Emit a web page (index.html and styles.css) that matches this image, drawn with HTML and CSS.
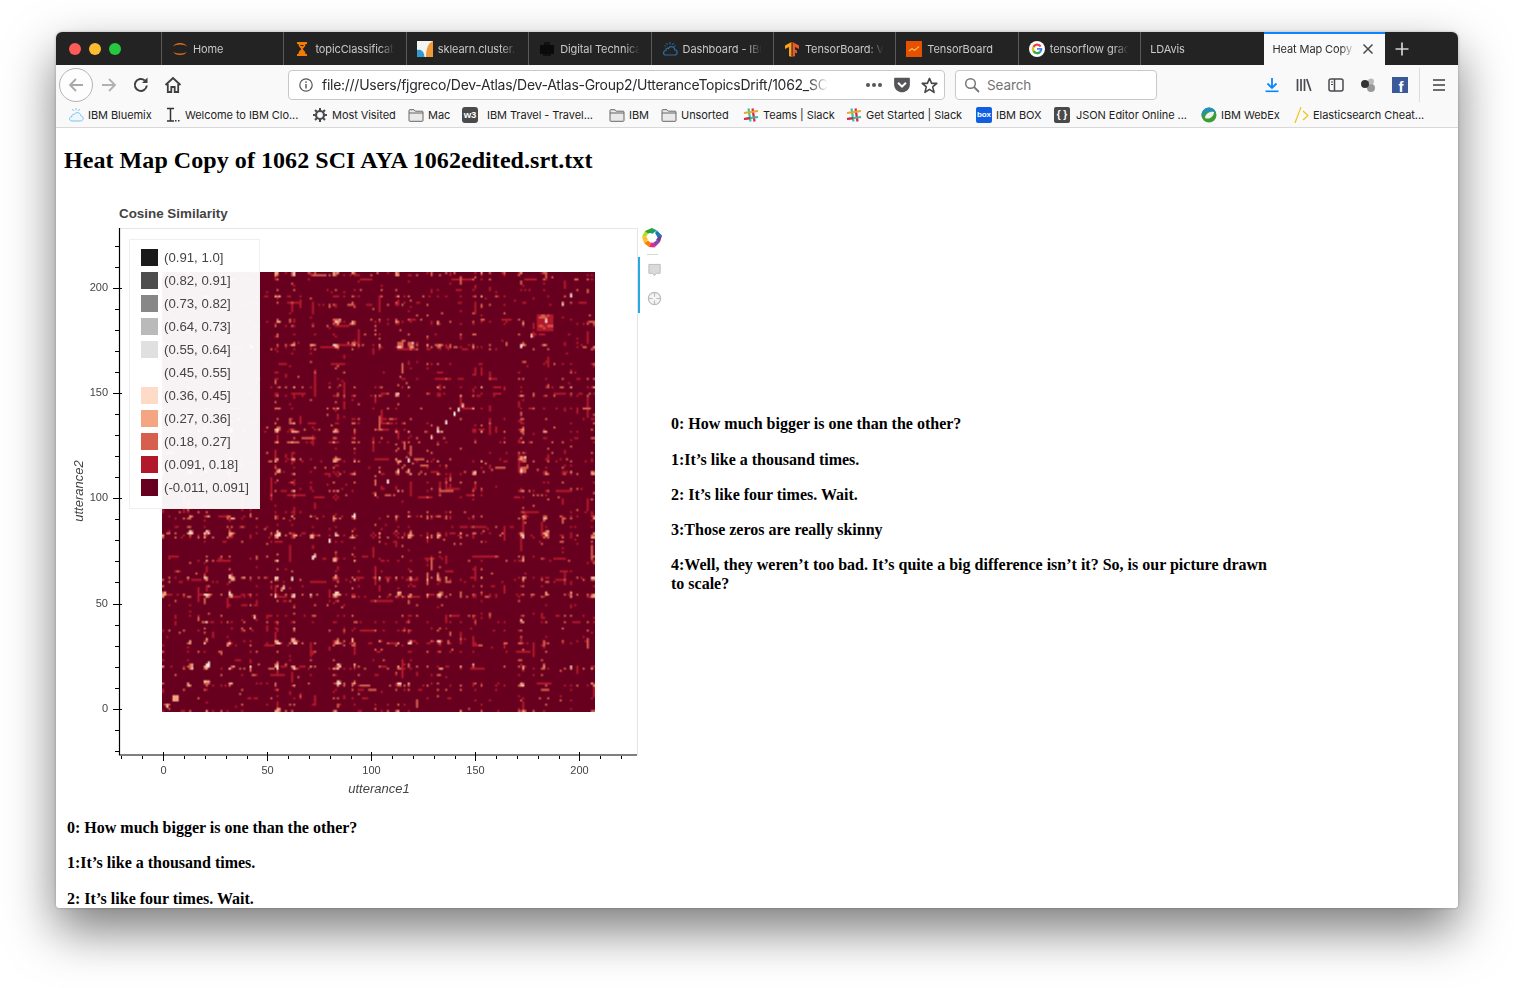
FILE: index.html
```html
<!DOCTYPE html>
<html lang="en">
<head>
<meta charset="utf-8">
<title>Heat Map</title>
<link rel="stylesheet" href="styles.css">
</head>
<body>
<div class="window">
  <div class="tabstrip">
    <div class="lights"><i class="light red"></i><i class="light yellow"></i><i class="light green"></i></div>
    <div class="tab">
      <svg class="fav" viewBox="0 0 16 16"><path d="M1 5.500C3 .8 13 .8 15 5.500C12.500 2.800 3.500 2.800 1 5.500ZM1 10.500C3 15.200 13 15.200 15 10.500C12.500 13.200 3.500 13.200 1 10.500Z" fill="#e46e17"/></svg>
      <span class="tab-title">Home</span>
    </div>
    <div class="tab">
      <svg class="fav" viewBox="0 0 16 16"><path d="M3 2H13M3 14H13" stroke="#f57c00" stroke-width="1.800"/><path d="M4.500 3H11.500C11.500 6 9 7 8.800 8C9 9 11.500 10 11.500 13H4.500C4.500 10 7 9 7.200 8C7 7 4.500 6 4.500 3ZM6 4C6.500 5.500 9.500 5.500 10 4Z" fill="#f57c00" fill-rule="evenodd"/></svg>
      <span class="tab-title">topicClassificat</span>
    </div>
    <div class="tab">
      <svg class="fav" viewBox="0 0 16 16"><rect width="16" height="16" fill="#f4f4f4"/><path d="M9 16C9 8 11 2 16 0V16Z" fill="#f09a37"/><path d="M0 9C4 8 7 10 7.500 16H0Z" fill="#3499cd"/></svg>
      <span class="tab-title">sklearn.cluster.</span>
    </div>
    <div class="tab">
      <svg class="fav" viewBox="0 0 16 16"><rect x="1" y="4" width="14" height="9" fill="#0a0a0a"/><rect x="5" y="1" width="6" height="3" fill="#111"/><rect x="4" y="13" width="8" height="2" fill="#111"/></svg>
      <span class="tab-title">Digital Technica</span>
    </div>
    <div class="tab">
      <svg class="fav" viewBox="0 0 16 16"><path d="M4 14H12.500C16 14 16 9 12.800 8.800C12.500 5 7.500 4.500 6.500 7.500C5 6.500 3.500 8 4 9.500C.5 10 1 14 4 14Z" fill="none" stroke="#2a6ea5" stroke-width="1.200"/><path d="M8 1V3.500M4.500 2L5.500 4M11.500 2L10.500 4M2.500 4.500L4 5.500M13.500 4.500L12 5.500" stroke="#2a6ea5" stroke-width="1"/></svg>
      <span class="tab-title">Dashboard - IBI</span>
    </div>
    <div class="tab">
      <svg class="fav" viewBox="0 0 16 16"><path d="M8.500 1L15 4.500V8L11 6V8.500L13 9.500V12.500L11 11.500V15L8.500 16V1Z" fill="#e55b2d"/><path d="M7.500 1L1 4.500V8L5 6V15L7.500 16V1Z" fill="#f9a11b"/></svg>
      <span class="tab-title">TensorBoard: V</span>
    </div>
    <div class="tab">
      <svg class="fav" viewBox="0 0 16 16"><rect width="16" height="16" fill="#e65100"/><path d="M3 10L6 7.500L8.500 9.500L13 5.500" fill="none" stroke="#ffb74d" stroke-width="1.200"/></svg>
      <span class="tab-title">TensorBoard</span>
    </div>
    <div class="tab">
      <svg class="fav" viewBox="0 0 16 16"><circle cx="8" cy="8" r="8" fill="#fff"/><path d="M12.700 5A5.300 5.300 0 0 0 3.500 5.200L5.400 6.700A3 3 0 0 1 10.600 5.900Z" fill="#ea4335"/><path d="M3.500 5.200A5.300 5.300 0 0 0 3.500 10.800L5.400 9.300A3 3 0 0 1 5.400 6.700Z" fill="#fbbc05"/><path d="M3.500 10.800A5.300 5.300 0 0 0 12.100 11.500L10.300 10A3 3 0 0 1 5.400 9.300Z" fill="#34a853"/><path d="M8 7H13.200C13.400 8.800 13 10.300 12.100 11.500L10.300 10C10.700 9.600 10.900 9.200 11 8.800H8Z" fill="#4285f4"/></svg>
      <span class="tab-title">tensorflow grac</span>
    </div>
    <div class="tab tab-plain">
      <span class="tab-title">LDAvis</span>
    </div>
    <div class="tab tab-active">
      <span class="tab-title">Heat Map Copy c</span>
      <svg class="tab-close" viewBox="0 0 12 12"><path d="M1.500 1.500L10.500 10.500M10.500 1.500L1.500 10.500" stroke="#4a4a4f" stroke-width="1.500"/></svg>
    </div>
    <svg class="newtab" viewBox="0 0 16 16"><path d="M8 1.500V14.500M1.500 8H14.500" stroke="#d4d4d4" stroke-width="1.700"/></svg>
  </div>

  <div class="toolbar">
    <div class="backbtn"><svg class="tool-ic" viewBox="0 0 18 18"><path d="M16 9H3M9 3L3 9L9 15" fill="none" stroke="#a9a9ac" stroke-width="1.800"/></svg></div>
    <svg class="tool-ic forward" viewBox="0 0 18 18"><path d="M2 9H15M9 3L15 9L9 15" fill="none" stroke="#b1b1b3" stroke-width="1.800"/></svg>
    <svg class="tool-ic reload" viewBox="0 0 18 18"><path d="M14.800 9.500A6 6 0 1 1 12.800 4.400" fill="none" stroke="#3f3f42" stroke-width="2"/><path d="M15.500 1.500V7H10Z" fill="#3f3f42"/></svg>
    <svg class="tool-ic home" viewBox="0 0 18 18"><path d="M1.500 9L9 2L16.500 9" fill="none" stroke="#3f3f42" stroke-width="1.900"/><path d="M3.800 8V16H7.300V11H10.700V16H14.200V8" fill="none" stroke="#3f3f42" stroke-width="1.800"/></svg>
    <div class="urlbar">
      <svg class="info" viewBox="0 0 16 16"><circle cx="8" cy="8" r="6.200" fill="none" stroke="#55555a" stroke-width="1.200"/><rect x="7.300" y="7" width="1.400" height="4.500" fill="#55555a"/><rect x="7.300" y="4.400" width="1.400" height="1.500" fill="#55555a"/></svg>
      <span class="url">file:///Users/fjgreco/Dev-Atlas/Dev-Atlas-Group2/UtteranceTopicsDrift/1062_SC</span>
      <span class="dots"><i></i><i></i><i></i></span>
      <svg class="pocket" viewBox="0 0 16 16"><path d="M1 2.500C1 1.800 1.500 1.500 2 1.500H14C14.500 1.500 15 1.800 15 2.500V7.500C15 11.500 11.500 14.500 8 14.500C4.500 14.500 1 11.500 1 7.500Z" fill="#55555a"/><path d="M4.500 6L8 9.500L11.500 6" fill="none" stroke="#fff" stroke-width="1.800"/></svg>
      <svg class="star" viewBox="0 0 16 16"><path d="M8 1.300L10 6H14.900L11 9.300L12.300 14.500L8 11.700L3.700 14.500L5 9.300L1.100 6H6Z" fill="none" stroke="#47474b" stroke-width="1.500" stroke-linejoin="round"/></svg>
    </div>
    <div class="searchbar">
      <svg class="search-ic" viewBox="0 0 16 16"><circle cx="6.500" cy="6.500" r="4.800" fill="none" stroke="#77777a" stroke-width="1.500"/><path d="M10 10L15 15" stroke="#77777a" stroke-width="1.800"/></svg>
      <span class="search-text">Search</span>
    </div>
    <div class="actions">
      <svg class="act" viewBox="0 0 16 16"><path d="M8 1V10.500M3.500 6.500L8 11L12.500 6.500" fill="none" stroke="#0a84ff" stroke-width="1.800"/><rect x="1.500" y="13.500" width="13" height="1.600" fill="#0a84ff"/></svg>
      <svg class="act" viewBox="0 0 16 16"><path d="M1.500 2V14M5 2V14M8.500 2V14M10.800 2L14.800 14" fill="none" stroke="#4a4a4f" stroke-width="1.700"/></svg>
      <svg class="act" viewBox="0 0 16 16"><rect x="1" y="2" width="14" height="12" rx="2" fill="none" stroke="#4a4a4f" stroke-width="1.500"/><path d="M6.500 2V14" stroke="#4a4a4f" stroke-width="1.500"/><path d="M3 5H5M3 7.500H5" stroke="#4a4a4f" stroke-width="1"/></svg>
      <svg class="act" viewBox="0 0 16 16"><circle cx="11" cy="4.500" r="3" fill="#bbb"/><circle cx="11" cy="11" r="4" fill="#999"/><circle cx="5" cy="7" r="4" fill="#333"/></svg>
      <svg class="act" viewBox="0 0 16 16"><rect width="16" height="16" fill="#3b5998"/><text class="fb-f" x="6.500" y="15">f</text></svg>
      <i class="act-sep"></i>
      <svg class="act menu" viewBox="0 0 16 16"><path d="M2 3H14M2 8H14M2 13H14" stroke="#3f3f42" stroke-width="1.700"/></svg>
    </div>
  </div>

  <div class="bookmarks">
    <span class="bm b1"><svg class="bm-ic" viewBox="0 0 16 16"><path d="M4 14H12.500C16 14 16 9 12.800 8.800C12.500 5 7.500 4.500 6.500 7.500C5 6.500 3.500 8 4 9.500C.5 10 1 14 4 14Z" fill="#eef7fd" stroke="#7ec3ec" stroke-width="1"/><path d="M8 1V3.500M4.500 2L5.500 4M11.500 2L10.500 4" stroke="#7ec3ec" stroke-width="1"/></svg>IBM Bluemix</span>
    <span class="bm b2"><svg class="bm-ic" viewBox="0 0 16 16"><path d="M2 1.500H9M5.500 1.500V14M2 14H9" fill="none" stroke="#333" stroke-width="1.500"/><rect x="10" y="13" width="1.500" height="1.500" fill="#333"/><rect x="13" y="13" width="1.500" height="1.500" fill="#333"/></svg>Welcome to IBM Clo...</span>
    <span class="bm b3"><svg class="bm-ic" viewBox="0 0 16 16"><circle cx="8" cy="8" r="4" fill="none" stroke="#4a4a4f" stroke-width="2.200"/><path d="M8 1V4M8 12V15M1 8H4M12 8H15M3 3L5 5M11 11L13 13M13 3L11 5M5 11L3 13" stroke="#4a4a4f" stroke-width="2"/></svg>Most Visited</span>
    <span class="bm b4"><svg class="bm-ic" viewBox="0 0 16 16"><path d="M1 13.500V3.500C1 3 1.300 2.700 1.800 2.700H6L7.300 4.200H14.200C14.700 4.200 15 4.500 15 5V13.500C15 14 14.700 14.300 14.200 14.300H1.800C1.300 14.300 1 14 1 13.500Z" fill="#e9e9e9" stroke="#666" stroke-width="1"/><path d="M1 6H15" stroke="#666" stroke-width="1"/></svg>Mac</span>
    <span class="bm b5"><span class="w3">w3</span>IBM Travel - Travel...</span>
    <span class="bm b6"><svg class="bm-ic" viewBox="0 0 16 16"><path d="M1 13.500V3.500C1 3 1.300 2.700 1.800 2.700H6L7.300 4.200H14.200C14.700 4.200 15 4.500 15 5V13.500C15 14 14.700 14.300 14.200 14.300H1.800C1.300 14.300 1 14 1 13.500Z" fill="#e9e9e9" stroke="#666" stroke-width="1"/><path d="M1 6H15" stroke="#666" stroke-width="1"/></svg>IBM</span>
    <span class="bm b7"><svg class="bm-ic" viewBox="0 0 16 16"><path d="M1 13.500V3.500C1 3 1.300 2.700 1.800 2.700H6L7.300 4.200H14.200C14.700 4.200 15 4.500 15 5V13.500C15 14 14.700 14.300 14.200 14.300H1.800C1.300 14.300 1 14 1 13.500Z" fill="#e9e9e9" stroke="#666" stroke-width="1"/><path d="M1 6H15" stroke="#666" stroke-width="1"/></svg>Unsorted</span>
    <span class="bm b8"><svg class="bm-ic" viewBox="0 0 16 16"><path d="M5.500 1.500L7.500 14.500" stroke="#36c5ab" stroke-width="2.200"/><path d="M9.500 1.500L11.500 14.500" stroke="#e01e5a" stroke-width="2.200"/><path d="M1 6L15 4" stroke="#e9a820" stroke-width="2.200"/><path d="M1 12L15 10" stroke="#3eb991" stroke-width="2.200"/><path d="M1 12L7 11.100" stroke="#e01e5a" stroke-width="2.200"/></svg>Teams | Slack</span>
    <span class="bm b9"><svg class="bm-ic" viewBox="0 0 16 16"><path d="M5.500 1.500L7.500 14.500" stroke="#36c5ab" stroke-width="2.200"/><path d="M9.500 1.500L11.500 14.500" stroke="#e01e5a" stroke-width="2.200"/><path d="M1 6L15 4" stroke="#e9a820" stroke-width="2.200"/><path d="M1 12L15 10" stroke="#3eb991" stroke-width="2.200"/><path d="M1 12L7 11.100" stroke="#e01e5a" stroke-width="2.200"/></svg>Get Started | Slack</span>
    <span class="bm b10"><span class="boxic">box</span>IBM BOX</span>
    <span class="bm b11"><span class="jsonic">{ }</span>JSON Editor Online ...</span>
    <span class="bm b12"><svg class="bm-ic" viewBox="0 0 16 16"><circle cx="8" cy="8" r="7.500" fill="#3f9c35"/><path d="M8 .5A7.500 7.500 0 0 0 .8 10C3 4 9 3 15 6A7.500 7.500 0 0 0 8 .5Z" fill="#1f8fc4"/><path d="M4 11C4 7 9 4 13 5C13 9 9 13 4 11Z" fill="#e9f3f3"/></svg>IBM WebEx</span>
    <span class="bm b13"><svg class="bm-ic" viewBox="0 0 16 16"><path d="M2 16L8 0" stroke="#f1c40f" stroke-width="1.200"/><path d="M10 4L15 8.500L10 13" fill="none" stroke="#f1c40f" stroke-width="1.200"/></svg>Elasticsearch Cheat...</span>
  </div>

  <main class="content">
    <h1 class="heading">Heat Map Copy of 1062 SCI AYA 1062edited.srt.txt</h1>
    <div class="row">
      <div class="plot">
        <div class="plot-title">Cosine Similarity</div>
        <svg class="plot-svg" viewBox="0 0 607 600">
          <path d="M55.500 22.500H573.500V549" fill="none" stroke="#e5e5e5" stroke-width="1"/>
          <path d="M55.500 22V549H573" fill="none" stroke="#000" stroke-width="1.200"/>
          <path d="M51 40.500H55M51 61.500H55M51 103.500H55M51 124.500H55M51 145.500H55M51 166.500H55M51 208.500H55M51 229.500H55M51 250.500H55M51 271.500H55M51 313.500H55M51 334.500H55M51 355.500H55M51 376.500H55M51 419.500H55M51 440.500H55M51 461.500H55M51 482.500H55M51 524.500H55M51 545.500H55" stroke="#000" stroke-width="1"/>
          <path d="M49 82.500H58M49 187.500H58M49 292.500H58M49 398.500H58M49 503.500H58" stroke="#000" stroke-width="1"/>
          <path d="M57.500 550V553M78.500 550V553M120.500 550V553M141.500 550V553M162.500 550V553M183.500 550V553M224.500 550V553M245.500 550V553M266.500 550V553M287.500 550V553M328.500 550V553M349.500 550V553M370.500 550V553M391.500 550V553M432.500 550V553M453.500 550V553M474.500 550V553M495.500 550V553M536.500 550V553M557.500 550V553" stroke="#000" stroke-width="1"/>
          <path d="M99.500 546V555M203.500 546V555M307.500 546V555M411.500 546V555M515.500 546V555" stroke="#000" stroke-width="1"/>
          <g class="tick-y">
            <text x="44" y="85">200</text>
            <text x="44" y="190">150</text>
            <text x="44" y="295">100</text>
            <text x="44" y="401">50</text>
            <text x="44" y="506">0</text>
          </g>
          <g class="tick-x">
            <text x="99.500" y="568">0</text>
            <text x="203.500" y="568">50</text>
            <text x="307.500" y="568">100</text>
            <text x="411.500" y="568">150</text>
            <text x="515.500" y="568">200</text>
          </g>
          <text class="axis-label" x="315" y="587" text-anchor="middle">utterance1</text>
          <text class="axis-label" transform="translate(19 285) rotate(-90)" text-anchor="middle">utterance2</text>
        </svg>
        <canvas class="heat" id="heat" width="208" height="208"></canvas>
        <div class="legend">
          <div class="leg-row"><i class="sw c1"></i>(0.91, 1.0]</div>
          <div class="leg-row"><i class="sw c2"></i>(0.82, 0.91]</div>
          <div class="leg-row"><i class="sw c3"></i>(0.73, 0.82]</div>
          <div class="leg-row"><i class="sw c4"></i>(0.64, 0.73]</div>
          <div class="leg-row"><i class="sw c5"></i>(0.55, 0.64]</div>
          <div class="leg-row"><i class="sw c6"></i>(0.45, 0.55]</div>
          <div class="leg-row"><i class="sw c7"></i>(0.36, 0.45]</div>
          <div class="leg-row"><i class="sw c8"></i>(0.27, 0.36]</div>
          <div class="leg-row"><i class="sw c9"></i>(0.18, 0.27]</div>
          <div class="leg-row"><i class="sw c10"></i>(0.091, 0.18]</div>
          <div class="leg-row"><i class="sw c11"></i>(-0.011, 0.091]</div>
        </div>
        <div class="bk-tools">
          <svg class="bk-logo" viewBox="0 0 20 20">
            <path d="M10 0L15 2.500L10 6L7 3Z" fill="#1b9e77"/><path d="M15 2.500L20 7.500L16 10L13 5Z" fill="#1f78b4"/><path d="M20 7.500L18 14L14 12L16 9Z" fill="#6a3d9a"/><path d="M18 14L13 19L11 15L15 12Z" fill="#8e44ad"/><path d="M13 19.500L7 19L9 14.500L12 15Z" fill="#e7298a"/><path d="M7 19L2 15L6 12.500L9 15Z" fill="#ff7f00"/><path d="M2 15L0 8.500L4 8L6 12Z" fill="#fdbf2f"/><path d="M0 8.500L3 3L7 3L5 8Z" fill="#b2df2a"/><path d="M3 3L10 0L9 5L6 5.500Z" fill="#33a02c"/>
            <circle cx="10" cy="10" r="3.800" fill="#fff"/>
          </svg>
          <i class="bk-sep"></i>
          <svg class="bk-ic" viewBox="0 0 16 16"><path d="M2 1.500H14V11H10L8 13.500L6 11H2Z" fill="#d8dadb" stroke="#b9bcbe" stroke-width="1"/></svg>
          <svg class="bk-ic" viewBox="0 0 16 16"><circle cx="8" cy="8" r="6.500" fill="#f4f4f4" stroke="#b9bcbe" stroke-width="1.300"/><path d="M8 1V6M8 10V15M1 8H6M10 8H15" stroke="#b9bcbe" stroke-width="1.300"/></svg>
          <i class="bk-active"></i>
        </div>
      </div>
      <div class="notes">
        <p class="note">0: How much bigger is one than the other?</p>
        <p class="note">1:It’s like a thousand times.</p>
        <p class="note">2: It’s like four times. Wait.</p>
        <p class="note">3:Those zeros are really skinny</p>
        <p class="note">4:Well, they weren’t too bad. It’s quite a big difference isn’t it? So, is our picture drawn to scale?</p>
      </div>
    </div>
    <div class="notes-below">
      <p class="note">0: How much bigger is one than the other?</p>
      <p class="note">1:It’s like a thousand times.</p>
      <p class="note">2: It’s like four times. Wait.</p>
    </div>
  </main>
</div>
<script src="heat.js"></script>
</body>
</html>
```

FILE: styles.css
```css
* { box-sizing: border-box; }
html, body { margin: 0; padding: 0; background: #fff; height: 988px; overflow: hidden; }
body { padding: 32px 56px 0; }

.window {
  width: 1402px;
  height: 876px;
  border-radius: 6px 6px 4px 4px;
  overflow: hidden;
  background: #fff;
  box-shadow: 0 22px 50px rgba(0,0,0,.52), 0 0 3px rgba(0,0,0,.25);
  display: flex;
  flex-direction: column;
}

/* tab strip */
.tabstrip { height: 33px; background: #232323; display: flex; flex: none; align-items: stretch; }
.lights { width: 105px; display: flex; align-items: center; gap: 8px; padding-left: 13px; flex: none; }
.light { width: 12px; height: 12px; border-radius: 50%; display: block; }
.red { background: #fc5b57; }
.yellow { background: #fdbc2e; }
.green { background: #27c83f; }
.tab {
  width: 122.400px; flex: none; display: flex; align-items: center; gap: 5px;
  padding: 0 8px 0 10px; border-left: 1px solid #5a5a5a; overflow: hidden;
}
.tab-plain { padding-left: 9px; }
.fav { width: 16px; height: 16px; flex: none; }
.tab-title {
  font: 11px/16px "Inter", "Liberation Sans", sans-serif; color: #c9c9c9; white-space: nowrap; overflow: hidden; flex: 1; min-width: 0; letter-spacing: -0.100px;
  -webkit-mask-image: linear-gradient(to right, #000 78%, transparent 96%);
  mask-image: linear-gradient(to right, #000 78%, transparent 96%);
}
.tab-active {
  width: 121px; margin-left: 1px; background: #f9f9fa; border-left: 0; border-top: 2px solid #0a84ff;
  padding: 0 11px 2px 9px; gap: 3px;
}
.tab-active .tab-title { color: #2b2b30; }
.tab-close { width: 12px; height: 12px; flex: none; }
.newtab { width: 16px; height: 16px; align-self: center; margin-left: 9px; flex: none; }

/* toolbar */
.toolbar { height: 39px; background: #f9f9fa; display: flex; align-items: center; flex: none; padding: 1px 0 0 3px; }
.backbtn {
  width: 34px; height: 34px; border-radius: 50%; border: 1px solid #b4b4b6; background: #fdfdfd;
  display: flex; align-items: center; justify-content: center; flex: none;
}
.tool-ic { width: 18px; height: 18px; flex: none; }
.forward { margin-left: 7px; }
.reload { margin-left: 14px; }
.home { margin-left: 14px; }
.urlbar {
  width: 657px; height: 30px; margin-left: 106px; background: #fff; border: 1px solid #c8c8ca; border-radius: 4px;
  display: flex; align-items: center; padding: 0 6px 0 9px; flex: none;
}
.info { width: 16px; height: 16px; flex: none; }
.url {
  font: 14px/18px "Inter", "Liberation Sans", sans-serif; color: #2a2a2e; white-space: nowrap; overflow: hidden;
  width: 506px; margin-left: 8px; flex: none; letter-spacing: -0.270px;
  -webkit-mask-image: linear-gradient(to right, #000 96%, transparent 100%);
  mask-image: linear-gradient(to right, #000 96%, transparent 100%);
}
.dots { display: flex; gap: 2px; margin-left: 38px; flex: none; }
.dots i { width: 4px; height: 4px; border-radius: 50%; background: #55555a; display: block; }
.pocket { width: 18px; height: 18px; margin-left: 11px; flex: none; }
.star { width: 17px; height: 17px; margin-left: 10px; flex: none; }
.searchbar {
  width: 202px; height: 30px; margin-left: 10px; background: #fff; border: 1px solid #c8c8ca; border-radius: 4px;
  display: flex; align-items: center; padding-left: 8px; gap: 7px; flex: none;
}
.search-ic { width: 16px; height: 16px; flex: none; }
.search-text { font: 13.500px/18px "Inter", "Liberation Sans", sans-serif; color: #737373; letter-spacing: -0.100px; }
.actions { display: flex; align-items: center; margin-left: 107px; gap: 16px; height: 100%; }
.act { width: 16px; height: 16px; flex: none; }
.fb-f { font: bold 15px "Liberation Sans", sans-serif; fill: #fff; }
.act-sep { width: 1px; height: 34px; background: #dcdcde; display: block; margin-left: -5px; }
.menu { margin-left: -5px; }

/* bookmarks */
.bookmarks {
  height: 24px; background: #f9f9fa; border-bottom: 1px solid #d8d8da; display: flex; align-items: center; flex: none;
  padding: 0 0 2px 12px;
}
.bm {
  display: flex; align-items: center; gap: 4px; flex: none;
  font: 11px/16px "Inter", "Liberation Sans", sans-serif; color: #1d1d22; white-space: nowrap; letter-spacing: -0.060px;
}
.bm-ic { width: 16px; height: 16px; flex: none; }
.b1 { width: 97px; }
.b2 { width: 147px; }
.b3 { width: 96px; }
.b4 { width: 54px; }
.b5 { width: 147px; gap: 9px; }
.b6 { width: 52px; }
.b7 { width: 82px; }
.b8 { width: 103px; }
.b9 { width: 130px; }
.b10 { width: 78px; }
.b11 { width: 147px; gap: 6px; }
.b12 { width: 92px; }
.w3 {
  width: 16px; height: 16px; border-radius: 3px; background: #4a4a4a; color: #fff; flex: none; text-align: center;
  font: bold 9.500px/16px "Liberation Sans", sans-serif;
}
.boxic {
  width: 16px; height: 16px; border-radius: 2px; background: #0f5fe0; color: #fff; flex: none; text-align: center;
  font: bold 8px/16px "Liberation Sans", sans-serif;
}
.jsonic {
  width: 16px; height: 16px; border-radius: 2px; background: #4a4a4a; color: #fff; flex: none; text-align: center;
  font: bold 10px/15px "Liberation Sans", sans-serif;
}

/* page */
.content { flex: 1; min-height: 0; padding: 0 8px; overflow: hidden; background: #fff; font-family: "Liberation Serif", serif; }
.heading { font-size: 24px; line-height: 27px; font-weight: bold; margin: 19px 0 0; color: #000; letter-spacing: 0.060px; }
.row { display: flex; align-items: center; margin-top: 32px; }
.plot { position: relative; width: 607px; flex: none; height: 600px; }
.plot-title {
  position: absolute; left: 55px; top: -1px;
  font: bold 13.400px/17px "Liberation Sans", sans-serif; color: #444;
}
.plot-svg { position: absolute; left: 0; top: 0; width: 607px; height: 600px; display: block; will-change: transform; }
.tick-y text { font: 11px "Liberation Sans", sans-serif; fill: #444; text-anchor: end; }
.tick-x text { font: 11px "Liberation Sans", sans-serif; fill: #444; text-anchor: middle; }
.axis-label { font: italic 13px "Liberation Sans", sans-serif; fill: #444; }
.heat { position: absolute; left: 98px; top: 66px; width: 433px; height: 440px; }
.legend {
  position: absolute; left: 65px; top: 33px; width: 131px; height: 270px;
  background: rgba(255,255,255,.95); border: 1px solid #efefef;
  display: flex; flex-direction: column; padding: 6px 0 0 11px;
}
.leg-row {
  height: 23px; display: flex; align-items: center; gap: 6px;
  font: 13.200px/17px "Liberation Sans", sans-serif; color: #444; white-space: nowrap;
}
.sw { width: 17px; height: 17px; display: block; flex: none; }
.c1 { background: #1a1a1a; }
.c2 { background: #4d4d4d; }
.c3 { background: #878787; }
.c4 { background: #bababa; }
.c5 { background: #e0e0e0; }
.c6 { background: #fff; }
.c7 { background: #fddbc7; }
.c8 { background: #f4a582; }
.c9 { background: #d6604d; }
.c10 { background: #b2182b; }
.c11 { background: #67001f; }
.bk-tools { position: absolute; left: 574px; top: 22px; width: 32px; height: 90px; display: flex; flex-direction: column; align-items: center; }
.bk-logo { width: 20px; height: 20px; margin: 0 4px 0 0; flex: none; }
.bk-sep { width: 11px; height: 1px; background: #d8d8d8; margin: 6px 4px 8px 0; display: block; flex: none; }
.bk-ic { width: 15px; height: 15px; margin: 0 0 13px 0; flex: none; }
.bk-active { position: absolute; left: 0; top: 29px; width: 2px; height: 56px; background: #26aae1; display: block; }
.notes { width: 600px; flex: none; padding-top: 12px; }
.note { margin: 0 0 16.250px; font-size: 16px; line-height: 19px; font-weight: bold; color: #000; }
.notes-below { margin: 12px 0 0 3px; }
```

FILE: heat.js
```js
(function () {
  var canvas = document.getElementById('heat');
  var ctx = canvas.getContext('2d');
  var N = 208;
  var seed = 20240;
  function rnd() {
    seed = (seed * 1664525 + 1013904223) >>> 0;
    return seed / 4294967296;
  }
  var strong = {
    0: .75, 12: .85, 13: .8, 20: .95, 21: .95, 32: .9, 33: .85, 42: .8, 54: 1, 55: 1, 62: 1, 63: 1,
    71: .7, 82: 1, 83: 1, 84: 1, 91: .9, 92: .9, 102: .5, 104: .75, 112: 1, 113: .85, 118: .85, 119: .7,
    127: .65, 132: .9, 133: .8, 143: .7, 149: .9, 153: .75, 172: 1, 173: 1, 183: .8, 184: .7, 196: .75, 206: .7, 207: .8
  };
  var s = [];
  var i, j, k, x, y;
  for (i = 0; i < N; i++) {
    if (strong[i] !== undefined) { s[i] = strong[i]; }
    else if (i % 7 === 3 || i % 11 === 6) { s[i] = .3 + rnd() * .2; }
    else { s[i] = .03 + rnd() * .08; }
  }
  var cols = ['#67001f', '#b2182b', '#d6604d', '#f4a582', '#fddbc7', '#ffffff'];
  var m = [];
  for (i = 0; i < N; i++) { m[i] = []; }
  function put(a, b, v) {
    if (a < 0 || b < 0 || a >= N || b >= N) { return; }
    m[a][b] = Math.max(m[a][b], v);
    m[b][a] = m[a][b];
  }
  for (i = 0; i < N; i++) {
    for (j = i; j < N; j++) {
      var p = s[i] * s[j];
      var r = rnd();
      var v = 0;
      if (r < p * .68) v = 1;
      if (r < p * .3) v = 2;
      if (p > .45 && r < p * .16) v = 3;
      m[i][j] = v;
      m[j][i] = v;
    }
  }
  /* short streaks on the busy rows and columns */
  for (k = 0; k < 520; k++) {
    var a = Math.floor(rnd() * N);
    if (s[a] < .25) { continue; }
    var b = Math.floor(rnd() * N);
    var len = 2 + Math.floor(rnd() * rnd() * 9);
    var tone = rnd() < .82 ? 1 : 2;
    for (j = b; j < b + len; j++) { put(a, j, tone); }
  }
  /* bright patches where two busy rows cross */
  for (i = 0; i < N; i++) {
    for (j = i; j < N; j++) {
      if (s[i] * s[j] < .7 || rnd() > .3) { continue; }
      var w = 1 + Math.floor(rnd() * 2);
      var h = 1 + Math.floor(rnd() * 2);
      var tip = rnd() < .3 ? 4 : 3;
      for (x = 0; x < w; x++) {
        for (y = 0; y < h; y++) { put(i + x, j + y, rnd() < .5 ? tip : 2); }
      }
    }
  }
  /* the block near the top right */
  for (i = 180; i < 188; i++) {
    for (j = 180; j < 188; j++) { m[i][j] = rnd() < .7 ? 1 : 2; }
  }
  /* the few near-identical pairs on the diagonal */
  var diag = [[2, 4], [22, 5], [31, 3], [44, 4], [54, 4], [57, 3], [58, 4], [62, 5], [72, 5], [73, 4], [80, 5], [83, 4], [92, 5], [102, 3], [108, 5], [113, 4], [118, 5], [129, 4], [132, 5], [136, 5], [140, 5], [142, 5], [144, 4], [172, 5], [177, 4], [184, 5], [192, 4], [196, 5]];
  diag.forEach(function (d) {
    m[d[0]][d[0]] = d[1];
    m[d[0]][d[0] + 1] = d[1] - 1;
  });
  for (i = 5; i < 8; i++) {
    for (j = 5; j < 8; j++) { m[i][j] = 3; }
  }
  for (i = 0; i < N; i++) {
    for (j = 0; j < N; j++) {
      ctx.fillStyle = cols[m[i][j]];
      ctx.fillRect(i, N - 1 - j, 1, 1);
    }
  }
})();
```
